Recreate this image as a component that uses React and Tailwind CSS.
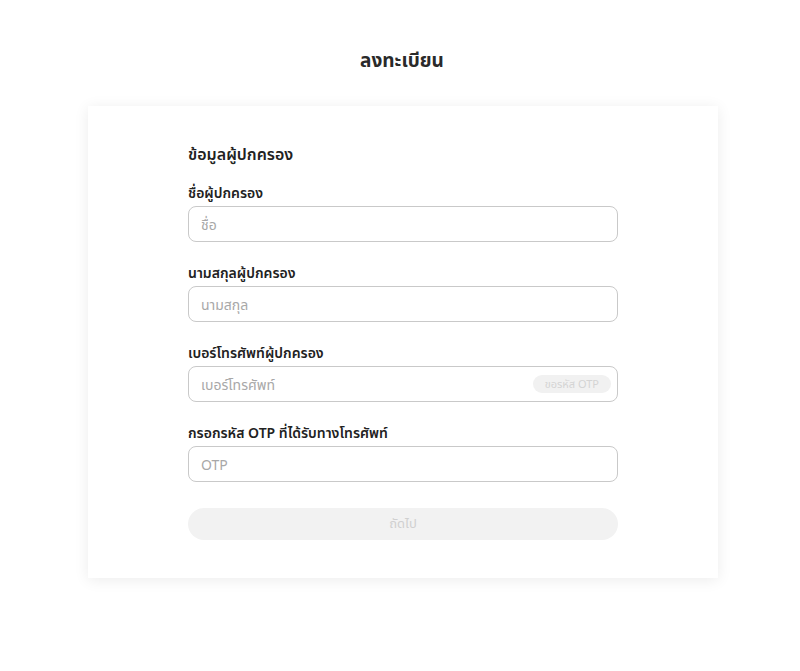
import React from 'react';

const font = { fontFamily: '"Noto Sans", "Noto Sans Thai", Inter, sans-serif' };

function Field({ label, placeholder, children }) {
  return (
    <div className="flex flex-col">
      <label className="text-[14px] leading-[20px] font-semibold text-[#222]">{label}</label>
      <div className="relative mt-[3px]">
        <input
          className="w-full h-[36px] rounded-[8px] border border-[#c9c9c9] bg-white px-[12px] text-[14px] text-[#333] placeholder:text-[#a8a8a8] outline-none"
          placeholder={placeholder}
        />
        {children}
      </div>
    </div>
  );
}

export default function App() {
  return (
    <div className="min-h-[671px] bg-white pt-[48px]" style={font}>
      <h1 className="text-center text-[19px] leading-[24px] font-bold text-[#2a2a2a] pl-[4px]">ลงทะเบียน</h1>

      <div className="mx-auto mt-[34px] w-[630px] translate-x-[3px] bg-white shadow-[0_2px_14px_rgba(0,0,0,0.08)] px-[100px] pt-[36px] pb-[38px]">
        <h2 className="text-[16px] leading-[24px] font-semibold text-[#222]">ข้อมูลผู้ปกครอง</h2>

        <div className="mt-[17px] flex flex-col gap-[21px]">
          <Field label="ชื่อผู้ปกครอง" placeholder="ชื่อ" />
          <Field label="นามสกุลผู้ปกครอง" placeholder="นามสกุล" />
          <Field label="เบอร์โทรศัพท์ผู้ปกครอง" placeholder="เบอร์โทรศัพท์">
            <button
              disabled
              className="absolute right-[7px] top-[9px] h-[18px] px-[12px] rounded-full bg-[#f1f1f1] text-[11px] leading-[18px] text-[#d4d4d4]"
            >
              ขอรหัส OTP
            </button>
          </Field>
          <Field label="กรอกรหัส OTP ที่ได้รับทางโทรศัพท์" placeholder="OTP" />
        </div>

        <button
          disabled
          className="mt-[26px] w-full h-[32px] rounded-full bg-[#f2f2f2] text-[13px] text-[#d0d0d0]"
        >
          ถัดไป
        </button>
      </div>
    </div>
  );
}
